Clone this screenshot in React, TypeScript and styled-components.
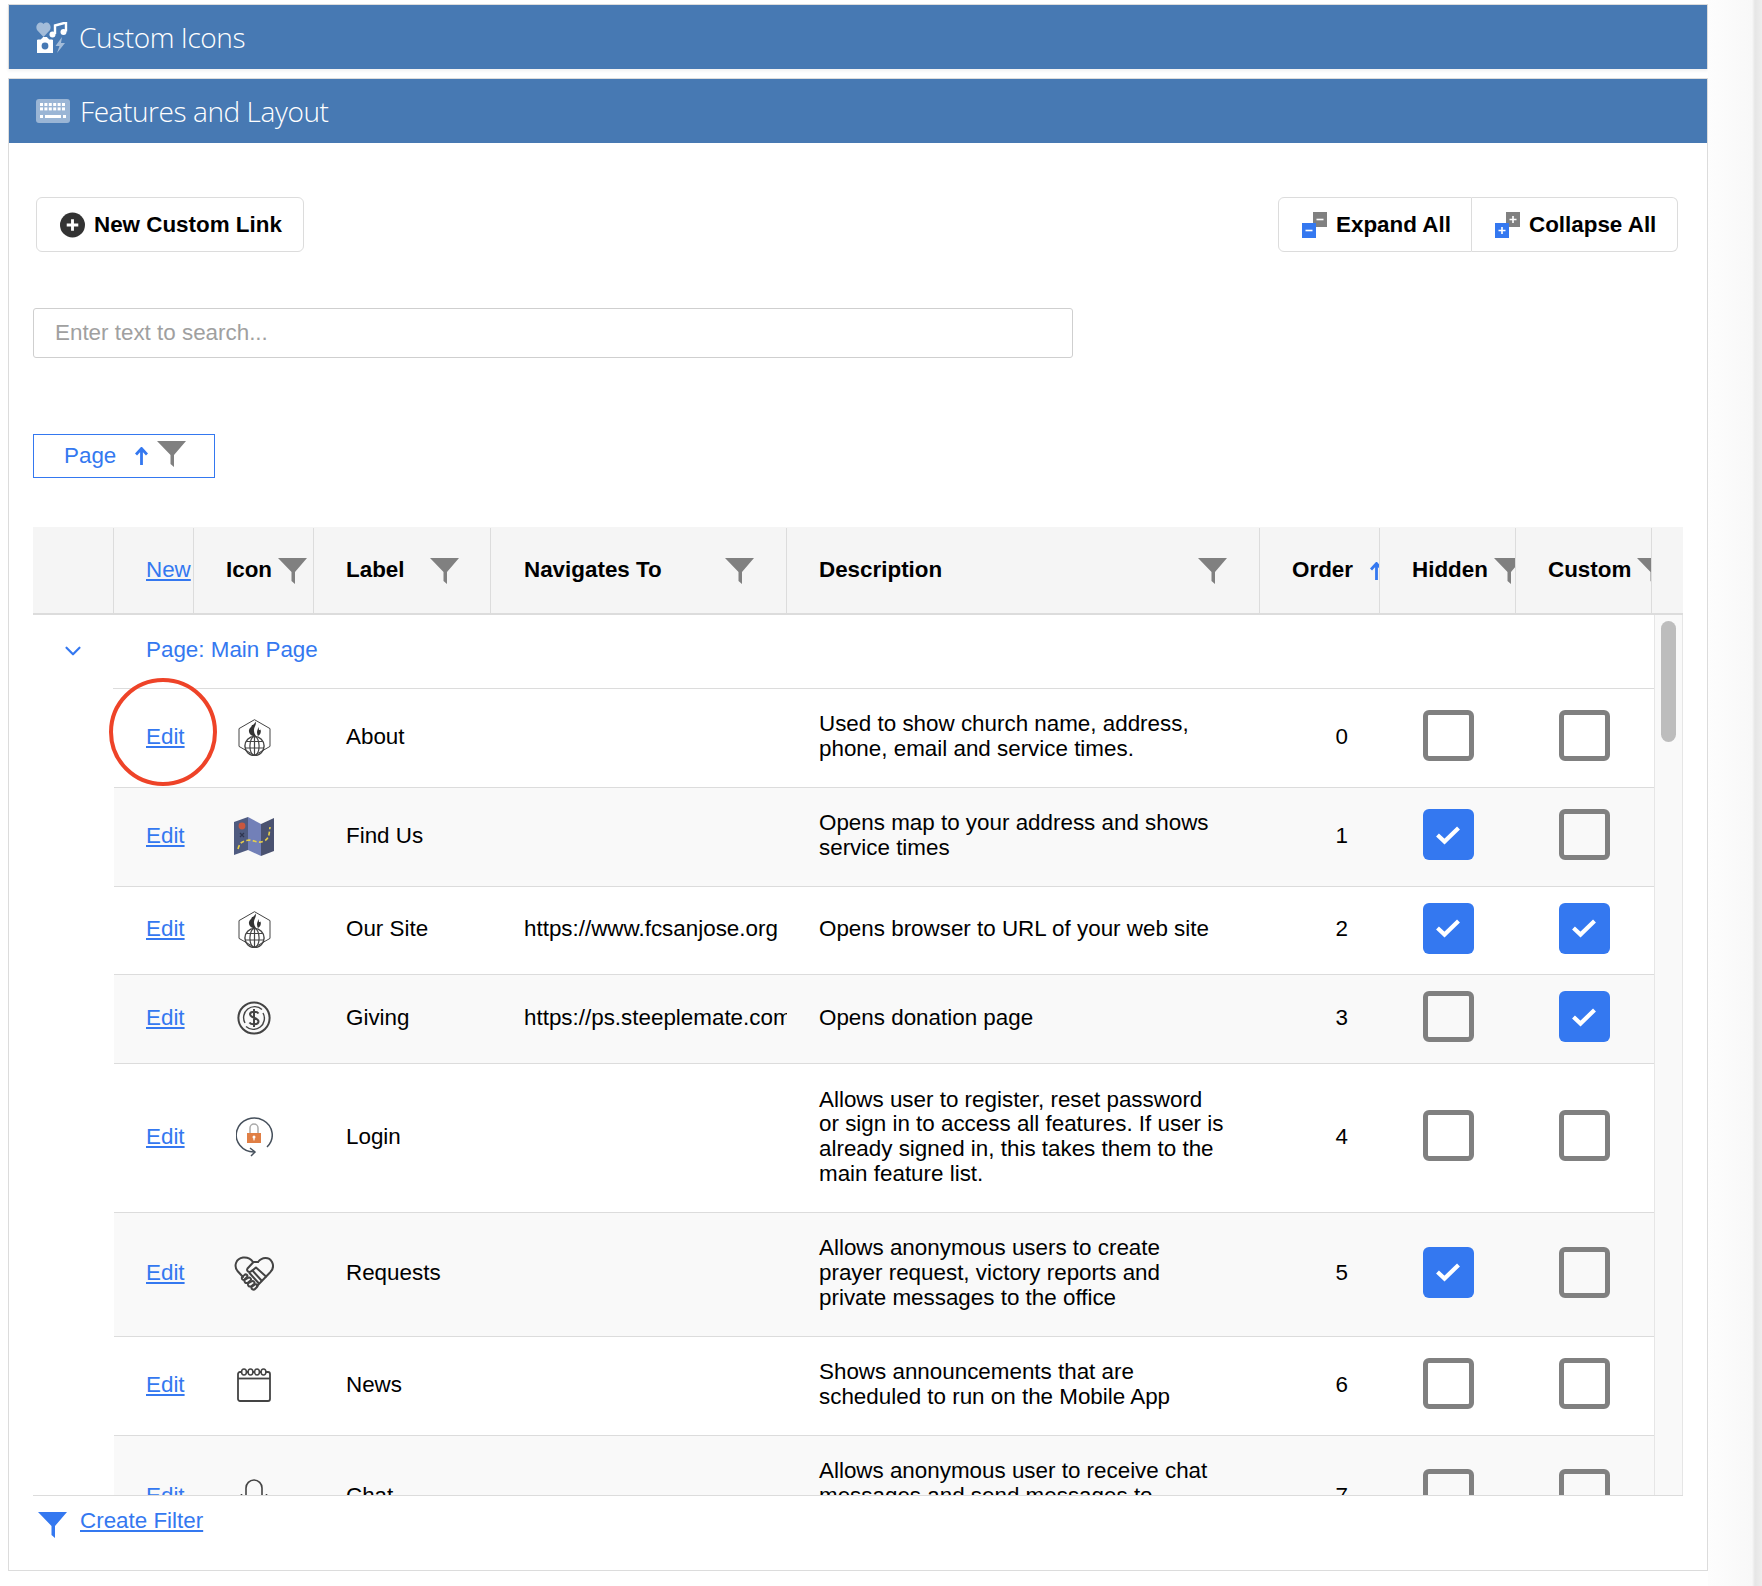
import React from 'react';
import styled, { createGlobalStyle, css } from 'styled-components';
import { ChevronDown } from 'lucide-react';

const BLUE = '#3478f0';
const GREY = '#808080';
const LINE = '#dcdcdc';
const INK = '#444';

const GlobalStyle = createGlobalStyle`
  html, body {
    margin: 0;
    padding: 0;
    background: #fff;
  }
  body {
    font-family: "Liberation Sans", Arial, sans-serif;
    font-size: 22.4px;
    line-height: 24.7px;
    color: #000;
  }
`;

const Page = styled.div`
  display: flex;
  height: 1586px;
  overflow: hidden;
`;

const Main = styled.main`
  width: 1700px;
  margin-left: 8px;
  padding-top: 4px;
  flex: none;
`;

const Gutter = styled.aside`
  flex: 1;
  background: linear-gradient(90deg, #fdfdfd 0, #f8f8f8 44px, #e6e6e6 47px, #eeeeee 100%);
`;

const Panel = styled.section<{ $collapsed?: boolean }>`
  border: 1px solid ${LINE};
  border-bottom-width: ${(p) => (p.$collapsed ? '0' : '1px')};
  margin-bottom: ${(p) => (p.$collapsed ? '9px' : '0')};
  box-shadow: ${(p) => (p.$collapsed ? '0 2px 3px rgba(0,0,0,.06)' : 'none')};
`;

const PanelBar = styled.header`
  height: 64px;
  display: flex;
  align-items: center;
  gap: 10px;
  padding-left: 27px;
  background: #4779b3;
  color: #fff;
  font-family: "Open Sans", sans-serif;
  font-weight: 300;
  font-size: 28px;
  letter-spacing: -0.42px;
  svg { flex: none; }
`;

const PanelBody = styled.div`
  padding: 54px 24px 0 24px;
  height: 1427px;
  box-sizing: border-box;
`;

const Toolbar = styled.div`
  display: flex;
  justify-content: space-between;
  padding: 0 5px 0 3px;
`;

const ToolButton = styled.button`
  height: 55px;
  display: flex;
  align-items: center;
  gap: 9px;
  padding: 0 21px 0 23px;
  background: #fff;
  border: 1px solid ${LINE};
  border-radius: 6px;
  font: bold 22.4px "Liberation Sans", Arial, sans-serif;
  color: #000;
  white-space: nowrap;
  svg { flex: none; }
`;

const ButtonGroup = styled.div`
  display: flex;
  ${ToolButton}:first-child {
    border-radius: 6px 0 0 6px;
    width: 194px;
  }
  ${ToolButton}:last-child {
    border-radius: 0 6px 6px 0;
    border-left: 0;
    width: 206px;
  }
`;

const SearchInput = styled.input`
  display: block;
  width: 1040px;
  height: 50px;
  box-sizing: border-box;
  margin-top: 56px;
  padding: 0 21px;
  border: 1px solid #cfcfcf;
  border-radius: 3px;
  outline: none;
  font: 22.4px "Liberation Sans", Arial, sans-serif;
  &::placeholder {
    color: #a0a0a0;
    opacity: 1;
  }
`;

const GroupChip = styled.div`
  width: 182px;
  height: 44px;
  box-sizing: border-box;
  margin-top: 76px;
  padding-left: 30px;
  display: flex;
  align-items: center;
  border: 1.5px solid ${BLUE};
  color: ${BLUE};
  svg:first-of-type { margin-left: 19px; }
  svg:last-of-type { margin: -4px 0 0 9px; }
`;

const Table = styled.div`
  margin-top: 49px;
  width: 1650px;
`;

const HeadRow = styled.div`
  display: grid;
  grid-template-columns: 81px 80px 120px 177px 296px 473px 120px 136px 136px 31px;
  height: 88px;
  padding-top: 1px;
  background: #f5f5f5;
  border-bottom: 2px solid ${LINE};
  box-sizing: border-box;
`;

const HeadCell = styled.div<{ $gap?: number; $pad?: number }>`
  display: flex;
  align-items: center;
  gap: ${(p) => p.$gap ?? 6}px;
  padding-left: ${(p) => p.$pad ?? 29}px;
  font-weight: bold;
  overflow: hidden;
  white-space: nowrap;
  &:not(:last-child) { border-right: 1px solid ${LINE}; }
  svg { flex: none; }
`;

const EditLink = styled.a`
  color: ${BLUE};
  text-decoration: underline;
  font-weight: normal;
`;

const TableBody = styled.div`
  display: flex;
  height: 880px;
  overflow: hidden;
  border-bottom: 1px solid ${LINE};
`;

const Rows = styled.div`
  width: 1621px;
  flex: none;
`;

const ScrollTrack = styled.div`
  flex: 1;
  padding: 6px 6px 0 6px;
  background: #f9f9f9;
  border-left: 1px solid #e6e6e6;
  border-right: 1px solid #e6e6e6;
  box-sizing: border-box;
`;

const ScrollThumb = styled.div`
  height: 121px;
  border-radius: 8px;
  background: #bdbdbd;
`;

const GroupHead = styled.div`
  display: flex;
  height: 74px;
  color: ${BLUE};
`;

const Chevron = styled.div`
  width: 80px;
  flex: none;
  display: flex;
  align-items: center;
  justify-content: center;
  padding-bottom: 2px;
`;

const GroupTitle = styled.div`
  flex: 1;
  display: flex;
  align-items: center;
  padding: 0 0 3px 33px;
  border-bottom: 1px solid ${LINE};
`;

const Row = styled.div<{ $height: number; $alt: boolean }>`
  display: grid;
  grid-template-columns: 80px 120px 177px 296px 473px 120px 136px 136px;
  margin-left: 81px;
  height: ${(p) => p.$height}px;
  box-sizing: border-box;
  padding-bottom: 2px;
  align-items: center;
  background: ${(p) => (p.$alt ? '#f9f9f9' : '#fff')};
  border-bottom: 1px solid ${LINE};
`;

const EditCell = styled.div<{ $circled?: boolean }>`
  position: relative;
  padding-left: 32px;
  ${(p) =>
    p.$circled &&
    css`
      &::after {
        content: '';
        position: absolute;
        left: -5px;
        top: -4px;
        width: 100px;
        height: 100px;
        transform: translateY(-43px);
        border: 4px solid #ee4328;
        border-radius: 50%;
      }
    `}
`;

const IconCell = styled.div`
  display: flex;
  justify-content: center;
  align-items: center;
`;

const TextCell = styled.div<{ $pad?: number }>`
  padding-left: ${(p) => p.$pad ?? 33}px;
  white-space: nowrap;
  overflow: hidden;
`;

const Description = styled.div`
  padding-left: 32px;
  white-space: nowrap;
`;

const OrderCell = styled.div`
  padding-right: 32px;
  text-align: right;
`;

const CheckCell = styled.div`
  display: flex;
  justify-content: center;
  margin-top: -3px;
`;

const CheckBox = styled.div<{ $checked: boolean }>`
  width: 51px;
  height: 51px;
  box-sizing: border-box;
  display: flex;
  align-items: center;
  justify-content: center;
  border-radius: 6px;
  border: ${(p) => (p.$checked ? 'none' : `5px solid ${GREY}`)};
  background: ${(p) => (p.$checked ? BLUE : 'transparent')};
`;

const FilterFoot = styled.div`
  display: flex;
  align-items: flex-start;
  gap: 13px;
  padding: 13px 0 0 5px;
  svg { margin-top: 3px; }
`;

const Funnel = ({ color = GREY }: { color?: string }) => (
  <svg width="29" height="26" viewBox="0 0 29 26">
    <path d="M0 0H29L17 14V26L13.5 23V14Z" fill={color} />
  </svg>
);

const ArrowUpIcon = () => (
  <svg width="13" height="18" viewBox="0 0 13 18" fill="none" stroke={BLUE} strokeWidth="2.8">
    <path d="M6.5 18V2M1 7.5L6.5 1.5L12 7.5" />
  </svg>
);

const CheckMark = () => (
  <svg width="26" height="20" viewBox="0 0 26 20" fill="none" stroke="#fff" strokeWidth="4.2">
    <path d="M2.5 10L9.5 16.5L23.5 3" />
  </svg>
);

const PlusCircle = () => (
  <svg width="25" height="26" viewBox="0 0 26 26">
    <circle cx="13" cy="13" r="13" fill="#333" />
    <path d="M13 7V19M7 13H19" stroke="#fff" strokeWidth="3" />
  </svg>
);

const StackIcon = ({ plus }: { plus?: boolean }) => (
  <svg width="25" height="26" viewBox="0 0 25 26">
    <rect x="11" y="0" width="14" height="15" fill={GREY} />
    <path d={plus ? 'M14.5 7.5H21.5M18 4V11' : 'M14.5 7.5H21.5'} stroke="#fff" strokeWidth="1.6" />
    <rect x="0" y="11" width="14" height="15" fill={BLUE} />
    <path d={plus ? 'M3.5 18.5H10.5M7 15V22' : 'M3.5 18.5H10.5'} stroke="#fff" strokeWidth="1.6" />
  </svg>
);

const CustomIconsGlyph = () => (
  <svg width="33" height="31" viewBox="0 0 33 31">
    <path d="M7.5 15L1 8C-1 4 2 0 5 0.5C6 0.6 7 1.2 7.5 2C8 1.2 9 0.6 10 0.5C13 0 16 4 14 8Z" fill="#fff" opacity=".5" />
    <path d="M19 12V3.5L30 0.5V9.5" fill="none" stroke="#fff" strokeWidth="2.4" />
    <circle cx="16.5" cy="12.5" r="3" fill="#fff" />
    <circle cx="27.5" cy="10" r="3" fill="#fff" />
    <path d="M1.5 18H5L7 15.5H11L13 18H16.5V31H1.5Z" fill="#fff" stroke="#fff" strokeLinejoin="round" />
    <circle cx="9" cy="24" r="3.4" fill="#4779b3" />
    <path d="M26 15L19.5 24H23.5L21 31L29 21H25Z" fill="#fff" opacity=".5" />
  </svg>
);

const KeyboardGlyph = () => {
  const keys: React.ReactElement[] = [];
  for (let y = 0; y < 2; y++) {
    for (let x = 0; x < 6; x++) {
      keys.push(<rect key={`${x}-${y}`} x={4 + x * 4.4} y={4 + y * 4.4} width="3" height="3" fill="#fff" />);
    }
  }
  return (
    <svg width="34" height="24" viewBox="0 0 34 24">
      <rect width="34" height="24" rx="3" fill="#fff" opacity=".45" />
      {keys}
      <rect x="4" y="16" width="3" height="3" fill="#fff" />
      <rect x="9" y="16" width="16" height="3" fill="#fff" />
      <rect x="27" y="16" width="3" height="3" fill="#fff" />
    </svg>
  );
};

const ChurchGlobe = () => (
  <svg width="33" height="37" viewBox="0 0 33 37" fill="none" stroke={INK}>
    <path d="M16.5 .7L32 9.6V27.4L16.5 36.3L1 27.4V9.6Z" />
    <path
      d="M17.5 2.5C19 6 15.5 8 16 12C16.2 14 17 15.5 18 17H15C12 16 10.5 13.5 11 11C11.5 8.5 13.5 8.5 14 6C15 6.5 16.5 5 17.5 2.5Z"
      fill="#333"
      stroke="none"
    />
    <path d="M20 8C20.5 10 19 11 19 13C19 14.5 19.5 16 20 17C22.5 15.5 23.5 13 22.5 10.5C22 11 21.5 11 21 11C21 10 20.7 8.8 20 8Z" fill="#333" stroke="none" />
    <circle cx="16.5" cy="27" r="9.6" strokeWidth="1.4" />
    <ellipse cx="16.5" cy="27" rx="4.6" ry="9.6" strokeWidth="1.2" />
    <path d="M8.5 22.5H24.5M7 29H26M16.5 17.4V36" strokeWidth="1.2" />
  </svg>
);

const MapIcon = () => (
  <svg width="40" height="39" viewBox="0 0 40 39">
    <path d="M0 5L14 0V33L0 38Z" fill="#4f5b80" />
    <path d="M14 0L27 7V39L14 33Z" fill="#7280b8" />
    <path d="M27 7L40 1V34L27 39Z" fill="#4a5270" />
    <circle cx="8" cy="9" r="3.4" fill="#c9573f" />
    <path d="M6 16L10 20M10 16L6 20" stroke="#2f3650" strokeWidth="1.2" />
    <path d="M4 32C6 24 10 24 15 23C20 23 24 27 30 24C35 22 35 18 36 10" fill="none" stroke="#e8cf4a" strokeWidth="1.6" strokeDasharray="4 2.4" />
  </svg>
);

const DollarIcon = () => (
  <svg width="34" height="34" viewBox="0 0 34 34" fill="none" stroke={INK} strokeWidth="2">
    <circle cx="17" cy="17" r="15.6" />
    <path d="M8 22A11 11 0 0 1 25 8.5M26 12A11 11 0 0 1 9 25.5" strokeWidth="1.4" />
    <path d="M21.5 12.5C20 10 13.5 10 13 13C12.5 17 21.5 16.5 21.5 20.5C21.5 24 14 24 12.5 21.5M17 8V26" strokeWidth="2" />
  </svg>
);

const LoginIcon = () => (
  <svg width="37" height="41" viewBox="0 0 37 41" fill="none">
    <path d="M31 30A18 17 0 1 0 18 35" stroke="#46505c" strokeWidth="1.5" />
    <path d="M14 31L19 35L15 39" stroke="#46505c" strokeWidth="1.5" />
    <path d="M14 16V11A4 4 0 0 1 22 11V16" stroke="#aaa" strokeWidth="1.5" />
    <rect x="11" y="16" width="14" height="10" fill="#e07f45" />
    <circle cx="18" cy="20" r="1.5" fill="#fff" />
    <rect x="17.4" y="20" width="1.2" height="3.4" fill="#fff" />
  </svg>
);

const HandshakeHeart = () => (
  <svg width="40" height="35" viewBox="0 0 40 35" fill="none" stroke={INK} strokeWidth="2" strokeLinecap="round" strokeLinejoin="round">
    <path d="M9 21L3.5 15C-0.5 10 2 2.5 9 1.5C13.5 1 17 3 19 6" />
    <path d="M24 6C28 1 35 0.5 38 6C40 10 38.5 14 36 16.5L23 30" />
    <path d="M24 6H19.5L13.5 12.5C12.5 14 13.5 16 15.5 16C17 16 18 15 22 11.5L32 20.5" />
    <path d="M18.5 14.5L27.5 24.5M15.5 17L24.5 27" />
    <path d="M8.5 20.5C7 22 8 24 10 24L13 21C14.5 19.5 12 17.5 10.5 19Z" />
    <path d="M10.5 24C10 26 11.5 27.5 13.5 27L16.5 24.5C18 23 15.5 20.5 14 22Z" />
    <path d="M14 27.5C13.5 29.5 15 31 17 30.5L20 28C21.5 26.5 19 24 17.5 25.5Z" />
    <path d="M17.5 31C17 33 19.5 34.5 21 33L23 31C24.5 29.5 22.5 27.5 21 28.5Z" />
  </svg>
);

const NewsIcon = () => (
  <svg width="34" height="34" viewBox="0 0 34 34" fill="none" stroke={INK} strokeWidth="1.8">
    <rect x="1" y="4" width="32" height="29" rx="2" />
    <path d="M1 10.5H33" />
    {[7, 13.5, 20, 26.5].map((x) => (
      <ellipse key={x} cx={x} cy="4" rx="2.4" ry="3" fill="#fff" strokeWidth="1.5" />
    ))}
  </svg>
);

const ChatIcon = () => (
  <svg width="34" height="34" viewBox="0 0 34 34" fill="none" stroke={INK} strokeWidth="1.6">
    <path d="M9 20V9A8 8 0 0 1 25 9V20" />
    <path d="M4.5 15V18M29.5 15V18" />
  </svg>
);

type RowData = {
  height: number;
  icon: React.ReactNode;
  label: string;
  url?: string;
  description: string[];
  hidden: boolean;
  custom: boolean;
};

const rows: RowData[] = [
  {
    height: 99,
    icon: <ChurchGlobe />,
    label: 'About',
    description: ['Used to show church name, address,', 'phone, email and service times.'],
    hidden: false,
    custom: false,
  },
  {
    height: 99,
    icon: <MapIcon />,
    label: 'Find Us',
    description: ['Opens map to your address and shows', 'service times'],
    hidden: true,
    custom: false,
  },
  {
    height: 88,
    icon: <ChurchGlobe />,
    label: 'Our Site',
    url: 'https://www.fcsanjose.org',
    description: ['Opens browser to URL of your web site'],
    hidden: true,
    custom: true,
  },
  {
    height: 89,
    icon: <DollarIcon />,
    label: 'Giving',
    url: 'https://ps.steeplemate.com',
    description: ['Opens donation page'],
    hidden: false,
    custom: true,
  },
  {
    height: 149,
    icon: <LoginIcon />,
    label: 'Login',
    description: [
      'Allows user to register, reset password',
      'or sign in to access all features. If user is',
      'already signed in, this takes them to the',
      'main feature list.',
    ],
    hidden: false,
    custom: false,
  },
  {
    height: 124,
    icon: <HandshakeHeart />,
    label: 'Requests',
    description: ['Allows anonymous users to create', 'prayer request, victory reports and', 'private messages to the office'],
    hidden: true,
    custom: false,
  },
  {
    height: 99,
    icon: <NewsIcon />,
    label: 'News',
    description: ['Shows announcements that are', 'scheduled to run on the Mobile App'],
    hidden: false,
    custom: false,
  },
  {
    height: 123,
    icon: <ChatIcon />,
    label: 'Chat',
    description: ['Allows anonymous user to receive chat', 'messages and send messages to', 'the office'],
    hidden: false,
    custom: false,
  },
];

const App = () => (
  <>
    <GlobalStyle />
    <Page>
      <Main>
        <Panel $collapsed>
          <PanelBar>
            <CustomIconsGlyph />
            Custom Icons
          </PanelBar>
        </Panel>
        <Panel>
          <PanelBar>
            <KeyboardGlyph />
            Features and Layout
          </PanelBar>
          <PanelBody>
            <Toolbar>
              <ToolButton>
                <PlusCircle />
                New Custom Link
              </ToolButton>
              <ButtonGroup>
                <ToolButton>
                  <StackIcon />
                  Expand All
                </ToolButton>
                <ToolButton>
                  <StackIcon plus />
                  Collapse All
                </ToolButton>
              </ButtonGroup>
            </Toolbar>
            <SearchInput placeholder="Enter text to search..." />
            <GroupChip>
              Page
              <ArrowUpIcon />
              <Funnel />
            </GroupChip>
            <Table>
              <HeadRow>
                <HeadCell />
                <HeadCell $pad={32}>
                  <EditLink>New</EditLink>
                </HeadCell>
                <HeadCell $pad={32}>
                  Icon
                  <Funnel />
                </HeadCell>
                <HeadCell $pad={32} $gap={26}>
                  Label
                  <Funnel />
                </HeadCell>
                <HeadCell $pad={33} $gap={63}>
                  Navigates To
                  <Funnel />
                </HeadCell>
                <HeadCell $pad={32} $gap={256}>
                  Description
                  <Funnel />
                </HeadCell>
                <HeadCell $pad={32} $gap={17}>
                  Order
                  <ArrowUpIcon />
                </HeadCell>
                <HeadCell $pad={32}>
                  Hidden
                  <Funnel />
                </HeadCell>
                <HeadCell $pad={32}>
                  Custom
                  <Funnel />
                </HeadCell>
                <HeadCell />
              </HeadRow>
              <TableBody>
                <Rows>
                  <GroupHead>
                    <Chevron>
                      <ChevronDown size={26} strokeWidth={2} />
                    </Chevron>
                    <GroupTitle>Page: Main Page</GroupTitle>
                  </GroupHead>
                  {rows.map((row, i) => (
                    <Row key={row.label} $height={row.height} $alt={i % 2 === 1}>
                      <EditCell $circled={i === 0}>
                        <EditLink>Edit</EditLink>
                      </EditCell>
                      <IconCell>{row.icon}</IconCell>
                      <TextCell $pad={32}>{row.label}</TextCell>
                      <TextCell>{row.url}</TextCell>
                      <Description>
                        {row.description.map((line) => (
                          <div key={line}>{line}</div>
                        ))}
                      </Description>
                      <OrderCell>{i}</OrderCell>
                      <CheckCell>
                        <CheckBox $checked={row.hidden}>{row.hidden && <CheckMark />}</CheckBox>
                      </CheckCell>
                      <CheckCell>
                        <CheckBox $checked={row.custom}>{row.custom && <CheckMark />}</CheckBox>
                      </CheckCell>
                    </Row>
                  ))}
                </Rows>
                <ScrollTrack>
                  <ScrollThumb />
                </ScrollTrack>
              </TableBody>
              <FilterFoot>
                <Funnel color={BLUE} />
                <EditLink>Create Filter</EditLink>
              </FilterFoot>
            </Table>
          </PanelBody>
        </Panel>
      </Main>
      <Gutter />
    </Page>
  </>
);

export default App;
